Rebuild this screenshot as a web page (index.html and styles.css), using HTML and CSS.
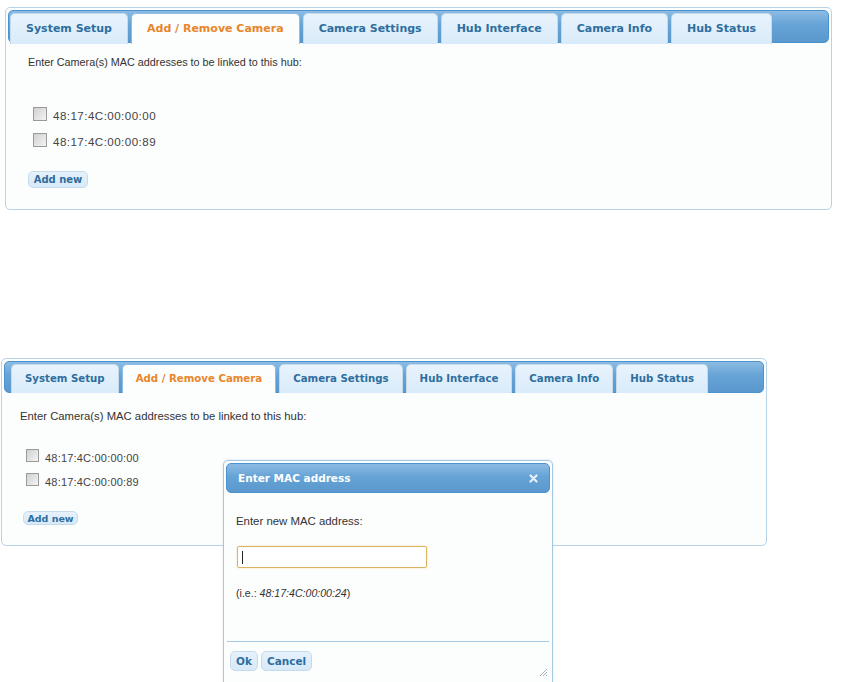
FILE: index.html
```html
<!DOCTYPE html>
<html lang="en">
<head>
    <meta charset="UTF-8">
    <title>Add / Remove Camera</title>
    <link rel="stylesheet" href="styles.css">
</head>
<body>
    <div class="page">
        <div class="panel">
            <div class="tabbar">
                <ul class="tabs">
                    <li class="tab">System Setup</li>
                    <li class="tab tab-active">Add / Remove Camera</li>
                    <li class="tab">Camera Settings</li>
                    <li class="tab">Hub Interface</li>
                    <li class="tab">Camera Info</li>
                    <li class="tab">Hub Status</li>
                </ul>
            </div>
            <div class="panel-body">
                <p class="intro">Enter Camera(s) MAC addresses to be linked to this hub:</p>
                <ul class="mac-list">
                    <li class="mac-row"><input type="checkbox" class="check"><span class="mac">48:17:4C:00:00:00</span></li>
                    <li class="mac-row"><input type="checkbox" class="check"><span class="mac">48:17:4C:00:00:89</span></li>
                </ul>
                <button class="btn btn-add">Add new</button>
            </div>
        </div>

        <div class="shot">
            <div class="panel panel-small">
                <div class="tabbar">
                    <ul class="tabs">
                        <li class="tab">System Setup</li>
                        <li class="tab tab-active">Add / Remove Camera</li>
                        <li class="tab">Camera Settings</li>
                        <li class="tab">Hub Interface</li>
                        <li class="tab">Camera Info</li>
                        <li class="tab">Hub Status</li>
                    </ul>
                </div>
                <div class="panel-body">
                    <p class="intro">Enter Camera(s) MAC addresses to be linked to this hub:</p>
                    <ul class="mac-list">
                        <li class="mac-row"><input type="checkbox" class="check"><span class="mac">48:17:4C:00:00:00</span></li>
                        <li class="mac-row"><input type="checkbox" class="check"><span class="mac">48:17:4C:00:00:89</span></li>
                    </ul>
                    <button class="btn btn-add">Add new</button>
                </div>
            </div>

            <!-- modal opened over the second panel -->
            <div class="dialog">
                <div class="dialog-title">
                    <span>Enter MAC address</span>
                    <svg class="dialog-close" width="9" height="9" viewBox="0 0 9 9">
                        <path d="M1.5 1.5 L7.5 7.5 M7.5 1.5 L1.5 7.5" stroke="#fff" stroke-width="2.2" stroke-linecap="round"/>
                    </svg>
                </div>
                <div class="dialog-body">
                    <p class="dialog-label">Enter new MAC address:</p>
                    <div class="text-input"><span class="caret"></span></div>
                    <p class="dialog-hint">(i.e.: <em>48:17:4C:00:00:24</em>)</p>
                </div>
                <div class="dialog-buttons">
                    <button class="btn">Ok</button>
                    <button class="btn">Cancel</button>
                </div>
                <svg class="resize" width="10" height="10" viewBox="0 0 10 10">
                    <path d="M9 2 L2 9 M9 5 L5 9 M9 8 L8 9" stroke="#9fb3c4" stroke-width="1"/>
                </svg>
            </div>
        </div>
    </div>
</body>
</html>
```

FILE: styles.css
```css
* {
    margin: 0;
    padding: 0;
    box-sizing: border-box;
}

body {
    background: #ffffff;
    font-family: 'Liberation Sans', Arial, sans-serif;
    color: #333333;
    height: 682px;
    overflow: hidden;
}

.page {
    padding-top: 7px;
}

/* tab panel */
.panel {
    margin-left: 5px;
    width: 827px;
    height: 203px;
    border: 1px solid #b7d3e8;
    border-radius: 5px;
    background: #fcfdfd;
    padding: 2px;
}

.tabbar {
    height: 33px;
    border: 1px solid #4a93cf;
    border-radius: 5px;
    background: linear-gradient(#8cbbe3, #66a3d6 45%, #5a98cd);
    padding: 2px 0 0 1px;
}

.tabs {
    list-style: none;
    display: flex;
    gap: 3px;
}

.tab {
    height: 31px;
    line-height: 30px;
    padding: 0 15px;
    border: 1px solid #c5dbec;
    border-bottom: 0;
    border-radius: 5px 5px 0 0;
    background: linear-gradient(#e8f3fc, #d9ebfa);
    font-family: 'DejaVu Sans', sans-serif;
    font-size: 11px;
    font-weight: bold;
    color: #2e6e9e;
    white-space: nowrap;
}

.tab-active {
    background: #fcfdfd;
    border-color: #8dbde6;
    color: #e8862a;
    padding: 0 15px;
}

.panel-body {
    padding: 12px 0 0 20px;
}

.intro {
    font-size: 10.8px;
    line-height: 14px;
}

.mac-list {
    list-style: none;
    margin-top: 38px;
    margin-left: 5px;
}

.mac-row {
    display: flex;
    align-items: flex-start;
    height: 26px;
}

.check {
    appearance: none;
    -webkit-appearance: none;
    width: 14px;
    height: 14px;
    border: 1px solid #9a9a9a;
    background: linear-gradient(135deg, #d0d0d0, #f4f4f4);
    margin-right: 6px;
}

.mac {
    font-size: 11.6px;
    line-height: 14px;
    padding-top: 2px;
    letter-spacing: 0.45px;
    color: #444444;
}

.btn {
    font-family: 'DejaVu Sans', sans-serif;
    font-size: 10px;
    font-weight: bold;
    color: #2e6e9e;
    background: linear-gradient(#e6f1fb, #d7e9f8);
    border: 1px solid #c5dbec;
    border-radius: 5px;
    height: 17px;
    padding: 0 4px;
}

.btn-add {
    margin-top: 12px;
    width: 60px;
}

/* second screenshot: same panel at a slightly different zoom */
.shot {
    position: relative;
    margin-top: 148px;
}

.panel-small {
    margin-left: 1px;
    width: 766px;
    height: 188px;
}

.panel-small .tabbar {
    height: 32px;
    padding: 2px 0 0 6px;
}

.panel-small .tabs {
    gap: 3px;
}

.panel-small .tab {
    height: 29px;
    line-height: 28px;
    padding: 0 13px;
    font-size: 10.2px;
}

.panel-small .tab-active {
    padding: 0 13px;
}

.panel-small .panel-body {
    padding: 16px 0 0 16px;
}

.panel-small .intro {
    font-size: 11.3px;
}

.panel-small .mac-list {
    margin-top: 26px;
    margin-left: 6px;
}

.panel-small .mac-row {
    height: 24px;
}

.panel-small .check {
    width: 13px;
    height: 13px;
}

.panel-small .mac {
    font-size: 11px;
    padding-top: 2px;
    letter-spacing: 0.2px;
}

.panel-small .btn-add {
    margin-top: 14px;
    width: 55px;
    height: 14px;
    margin-left: 3px;
    padding: 0;
    font-size: 9.5px;
}

/* dialog */
.dialog {
    position: absolute;
    left: 223px;
    top: 102px;
    width: 330px;
    height: 240px;
    border: 1px solid #a6c9e2;
    border-radius: 5px;
    background: #fcfdfd;
    padding: 2px;
    box-shadow: 0 0 2px rgba(166, 201, 226, 0.6);
}

.dialog-title {
    height: 30px;
    border: 1px solid #4a93cf;
    border-radius: 5px;
    background: linear-gradient(#8cbbe3, #66a3d6 45%, #5a98cd);
    display: flex;
    align-items: center;
    justify-content: space-between;
    padding: 0 11px 0 11px;
    font-family: 'DejaVu Sans', sans-serif;
    font-size: 10.5px;
    font-weight: bold;
    color: #ffffff;
}

.dialog-close {
    opacity: 0.85;
}

.dialog-body {
    padding: 21px 0 0 10px;
    height: 148px;
}

.dialog-label {
    font-size: 11.4px;
    line-height: 14px;
}

.text-input {
    margin-top: 18px;
    margin-left: 1px;
    width: 190px;
    height: 22px;
    border: 1px solid #d9b461;
    border-radius: 2px;
    background: #ffffff;
    box-shadow: 0 0 2px rgba(240, 200, 110, 0.6);
    padding: 4px 0 0 4px;
}

.caret {
    display: block;
    width: 1px;
    height: 13px;
    background: #222222;
}

.dialog-hint {
    margin-top: 18px;
    font-size: 10.6px;
    line-height: 14px;
}

.dialog-buttons {
    border-top: 1px solid #a6c9e2;
    margin: 0 1px;
    padding: 9px 0 0 3px;
    display: flex;
    gap: 3px;
}

.dialog-buttons .btn {
    height: 20px;
    padding: 0 5px;
    font-size: 10.5px;
}

.resize {
    position: absolute;
    right: 4px;
    top: 206px;
}
```
